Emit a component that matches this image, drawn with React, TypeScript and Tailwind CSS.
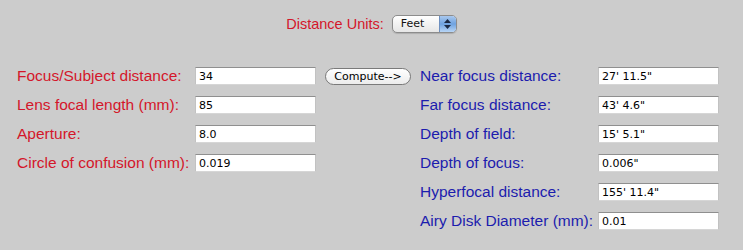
import React from "react";

const fieldCls =
  "h-[18px] w-[121px] bg-white border border-t-[#8f8f8f] border-x-[#c2c2c2] border-b-[#d6d6d6] pl-[3px] text-[11px] leading-[16px] text-black outline-none [font-family:'DejaVu_Sans',sans-serif]";

function Field({ value }: { value: string }) {
  return <input className={fieldCls} defaultValue={value} readOnly />;
}

const left = [
  ["Focus/Subject distance:", "34"],
  ["Lens focal length (mm):", "85"],
  ["Aperture:", "8.0"],
  ["Circle of confusion (mm):", "0.019"],
];
const right = [
  ["Near focus distance:", "27' 11.5\""],
  ["Far focus distance:", "43' 4.6\""],
  ["Depth of field:", "15' 5.1\""],
  ["Depth of focus:", "0.006\""],
  ["Hyperfocal distance:", "155' 11.4\""],
  ["Airy Disk Diameter (mm):", "0.01"],
];

export default function App() {
  return (
    <div className="w-[743px] h-[250px] bg-[#cccccc] [font-family:'Liberation_Sans',Arial,sans-serif] text-[15.5px] overflow-hidden">
      <div className="flex justify-center items-center gap-[8px] pt-[15px] h-[33px]">
        <span className="text-[#d4162a] text-[14.5px] leading-[18px]">Distance Units:</span>
        <div className="relative flex h-[18px] w-[65px] rounded-[5px] border border-[#8c8c8c] bg-gradient-to-b from-white to-[#e6e6e6] overflow-hidden shadow-[0_1px_1px_rgba(0,0,0,0.15)]">
          <span className="flex-1 pl-[8px] text-[11px] leading-[16px] font-medium text-[#111] [font-family:'DejaVu_Sans',sans-serif]">
            Feet
          </span>
          <div className="w-[17px] h-full border-l border-[#6d8fbf] bg-gradient-to-b from-[#a9c8ee] via-[#6ea2e0] to-[#b8d5f5] flex flex-col items-center justify-center gap-[2px]">
            <svg width="7" height="4" viewBox="0 0 7 4"><path d="M0 4 L3.5 0 L7 4Z" fill="#1b2a44" /></svg>
            <svg width="7" height="4" viewBox="0 0 7 4"><path d="M0 0 L3.5 4 L7 0Z" fill="#1b2a44" /></svg>
          </div>
        </div>
      </div>
      <div className="flex items-start pl-[17px] pt-[34px]">
        <div className="flex flex-col gap-[11px]">
          {left.map(([l, v]) => (
            <div key={l} className="flex items-center h-[18px]">
              <span className="w-[178px] text-[#d4162a] whitespace-nowrap">{l}</span>
              <Field value={v} />
            </div>
          ))}
        </div>
        <button className="ml-[9px] mt-[1px] h-[17px] w-[86px] rounded-full border border-[#7a7a7a] bg-gradient-to-b from-white to-[#ececec] text-[11px] leading-[15px] text-black [font-family:'DejaVu_Sans',sans-serif]">
          Compute--&gt;
        </button>
        <div className="ml-[9px] flex flex-col gap-[11px]">
          {right.map(([l, v]) => (
            <div key={l} className="flex items-center h-[18px]">
              <span className="w-[178px] text-[#1c1cae] whitespace-nowrap">{l}</span>
              <Field value={v} />
            </div>
          ))}
        </div>
      </div>
    </div>
  );
}
